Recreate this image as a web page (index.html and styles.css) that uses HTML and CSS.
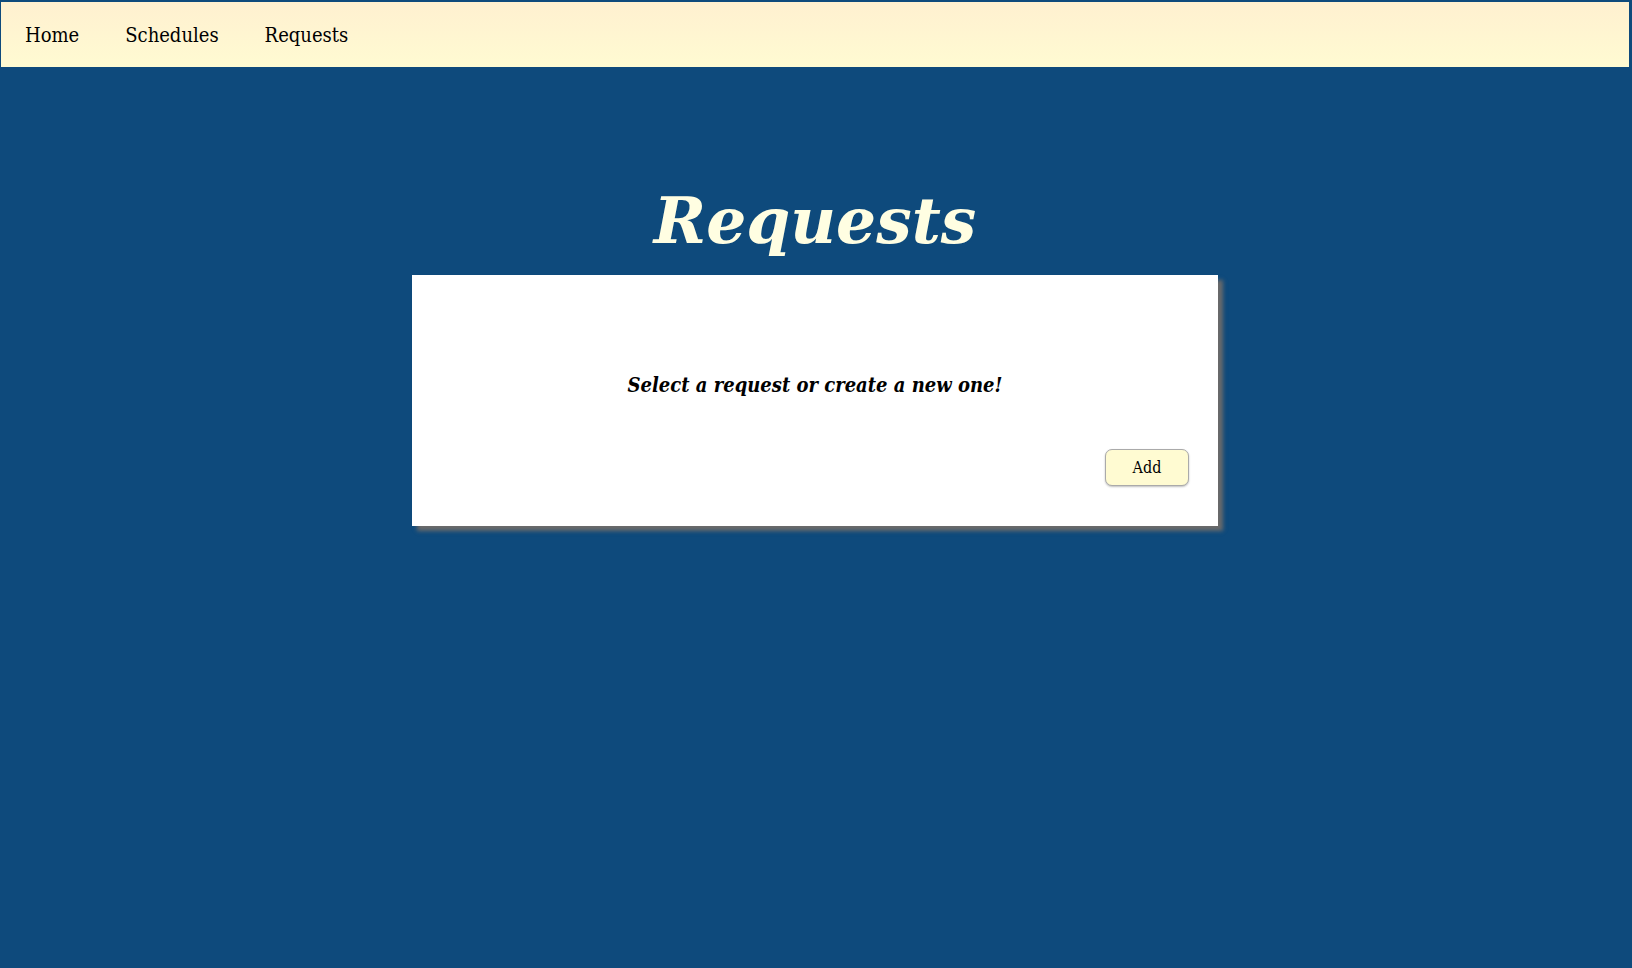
FILE: index.html
```html
<!DOCTYPE html>
<html>
<head>
<meta charset="utf-8">
<link rel="stylesheet" href="styles.css">
</head>
<body>
<nav class="nav">
  <a class="nav-link" href="#">Home</a>
  <a class="nav-link" href="#">Schedules</a>
  <a class="nav-link" href="#">Requests</a>
</nav>
<main class="main">
  <h1 class="title">Requests</h1>
  <section class="card">
    <p class="hint">Select a request or create a new one!</p>
    <div class="actions">
      <button class="btn">Add</button>
    </div>
  </section>
</main>
</body>
</html>
```
FILE: styles.css
```css
html, body {
  margin: 0;
  padding: 0;
  background: #0e4a7c;
  font-family: "DejaVu Serif Condensed", "DejaVu Serif", serif;
  font-stretch: condensed;
}
body {
  padding: 2px 3px 0 1px;
  min-height: 966px;
}
.nav {
  display: flex;
  align-items: center;
  height: 65px;
  padding: 0 0 0 24px;
  gap: 46px;
  background: linear-gradient(#fff0d0, #fffbd2);
}
.nav-link {
  color: #000;
  text-decoration: none;
  font-size: 20px;
}
.main {
  display: flex;
  flex-direction: column;
  align-items: center;
}
.title {
  margin: 117px 0 0 0;
  font-family: "DejaVu Serif", serif;
  font-stretch: normal;
  font-size: 63px;
  font-style: italic;
  font-weight: bold;
  color: #fffee2;
  line-height: 75px;
  height: 91px;
}
.card {
  width: 806px;
  height: 251px;
  box-sizing: border-box;
  background: #fff;
  box-shadow: 5px 5px 4px #6a6a6a;
  padding: 98px 29px 0 0;
}
.hint {
  margin: 0;
  text-align: center;
  font-size: 20px;
  font-weight: bold;
  font-style: italic;
  padding-left: 29px;
  line-height: 24px;
}
.actions {
  display: flex;
  justify-content: flex-end;
  margin-top: 52px;
}
.btn {
  width: 84px;
  height: 37px;
  background: #fffbd2;
  border: 1px solid #aaa;
  border-radius: 7px;
  box-shadow: 0 1px 2px rgba(0,0,0,0.25);
  font-family: "DejaVu Serif Condensed", "DejaVu Serif", serif;
  font-stretch: condensed;
  font-size: 16px;
  color: #000;
}
```
